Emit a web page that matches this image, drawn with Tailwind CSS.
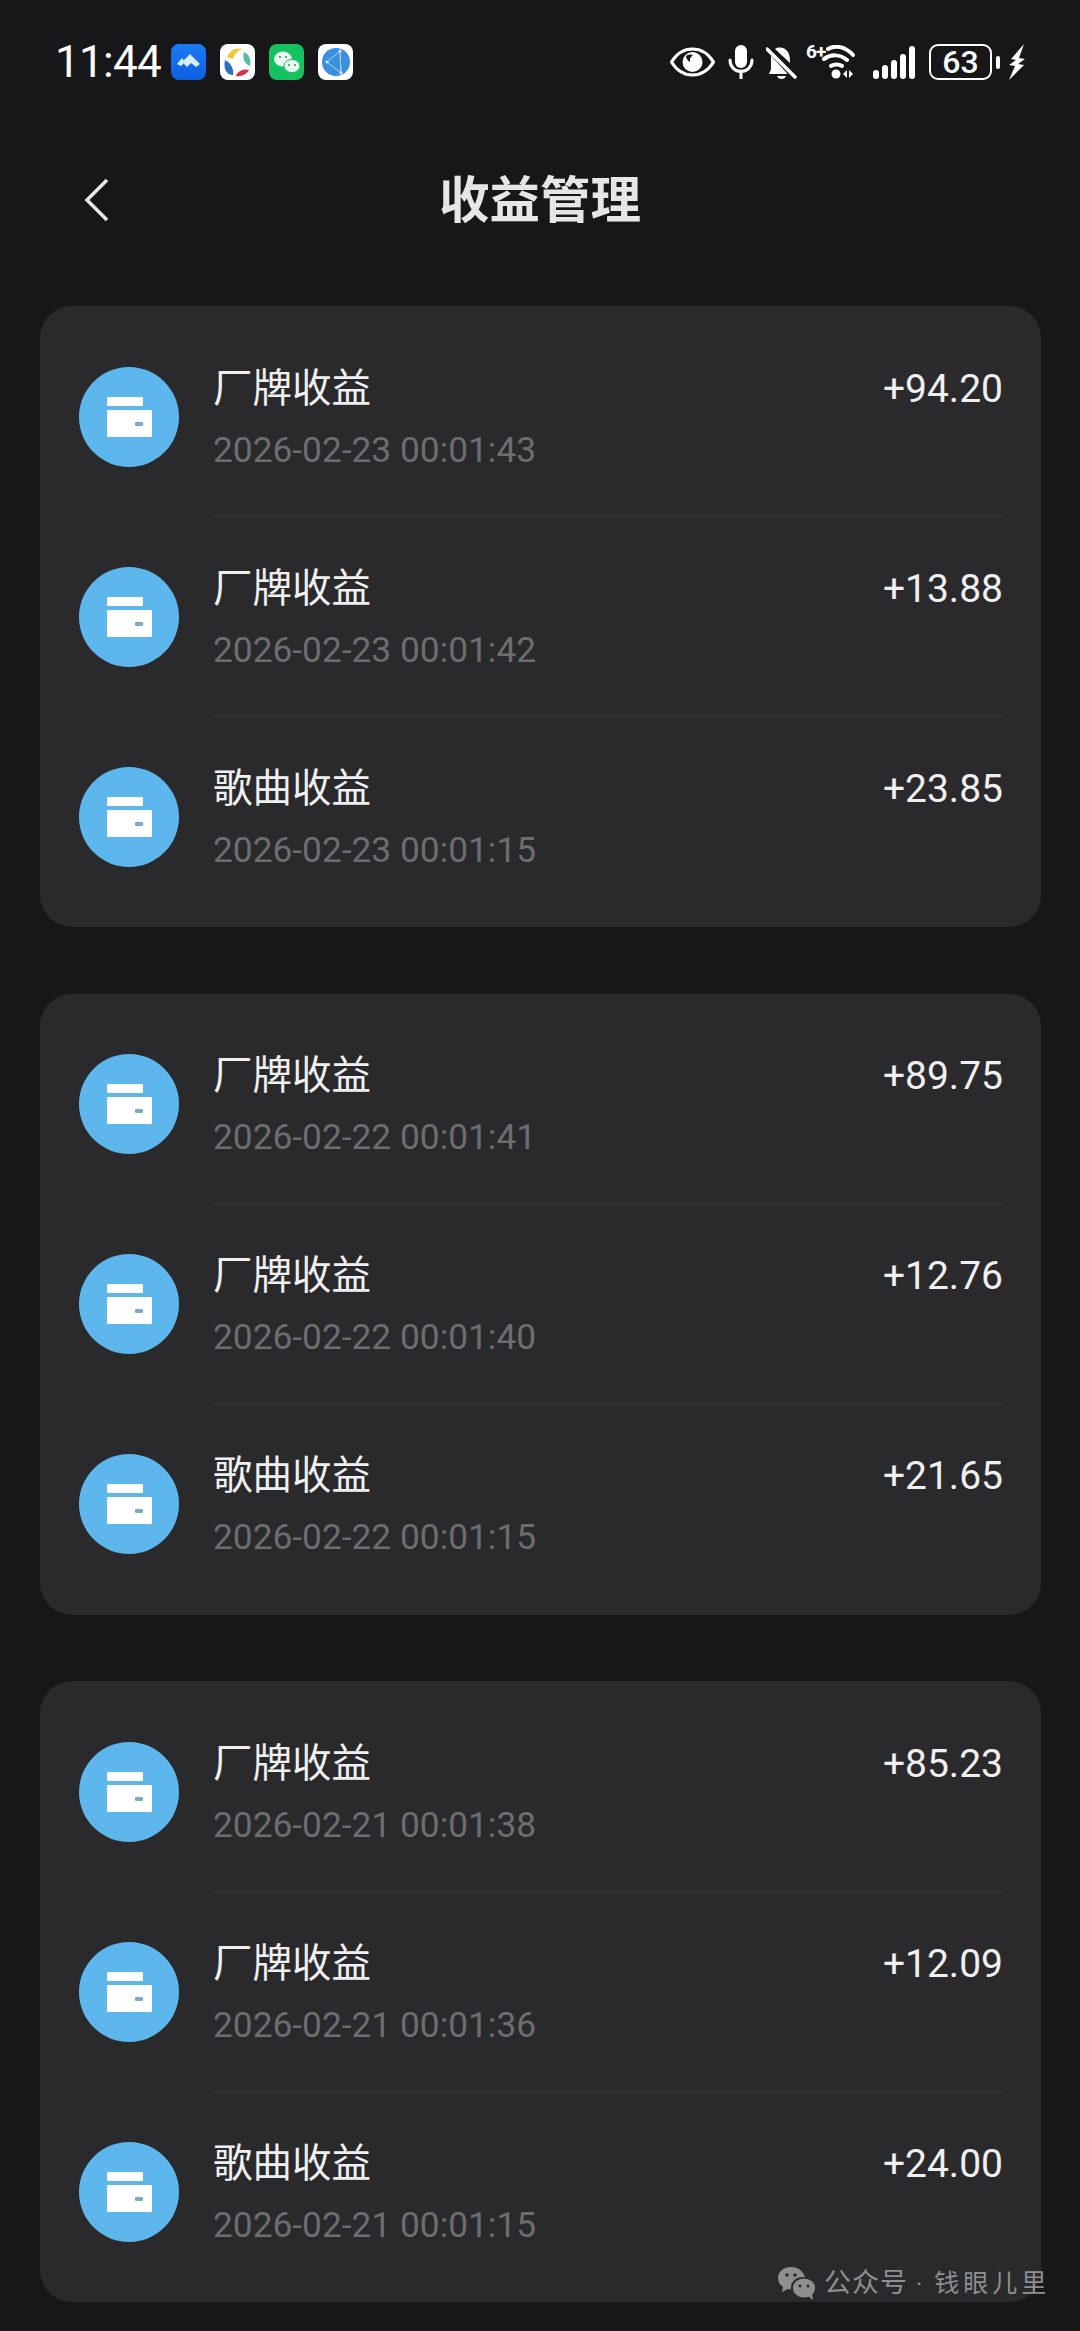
<!DOCTYPE html>
<html lang="zh-CN">
<head>
  <meta charset="UTF-8">
  <title>收益管理</title>
  <meta name="viewport" content="width=device-width, initial-scale=1.0">
  <script src="https://cdn.jsdelivr.net/npm/@tailwindcss/browser@4"></script>
</head>
<body class="bg-[#17171a] text-white font-['Roboto','Noto_Sans_CJK_SC',sans-serif] w-[1080px] h-[2331px] overflow-hidden relative">

  <svg class="hidden">
    <symbol id="wallet" viewBox="0 0 45 40">
      <rect x="0" y="0" width="36" height="9" rx="1" fill="#fff"/>
      <path d="M1 13h43a1 1 0 0 1 1 1v25a1 1 0 0 1-1 1H1a1 1 0 0 1-1-1V14a1 1 0 0 1 1-1z" fill="#fff"/>
      <rect x="28" y="25" width="8" height="4" rx="1" fill="#7fa9c4"/>
    </symbol>
  </svg>

  <!-- status bar -->
  <div class="h-[124px] pl-[55px] pr-[54px] flex items-center">
    <span class="text-[44px] leading-none tracking-[-0.7px] w-[116px] -mt-[1px]">11:44</span>
    <div class="flex gap-[14px]">
      <svg class="w-[35px] h-[36px]" viewBox="0 0 35 36">
        <defs><linearGradient id="blue" x1="0" y1="0" x2="0" y2="1"><stop offset="0" stop-color="#1c7cf5"/><stop offset="1" stop-color="#0a5fe0"/></linearGradient></defs>
        <rect width="35" height="36" rx="8" fill="url(#blue)"/>
        <path d="M6 20l5-6 3 4-4 4zM13 16l6-6 10 10-4 3-5-4-4 4-3-3z" fill="#dcebff"/>
      </svg>
      <svg class="w-[35px] h-[36px]" viewBox="0 0 35 36">
        <rect width="35" height="36" rx="8" fill="#fff"/>
        <path d="M7 13C10 6 16 3 23 5c-5 1-8 4-10 10z" fill="#f1c62f"/>
        <path d="M24 8c6 3 7 8 6 14-5-2-8-7-6-14z" fill="#4fbf9f"/>
        <path d="M5 16c5 2 9 8 8 15-6 0-10-6-8-15z" fill="#2d6fc4"/>
        <path d="M16 32c1-4 7-8 13-6-2 4-8 7-13 6z" fill="#d9304f"/>
      </svg>
      <svg class="w-[35px] h-[36px]" viewBox="0 0 35 36">
        <rect width="35" height="36" rx="8" fill="#16c160"/>
        <ellipse cx="14" cy="15" rx="9" ry="7.500" fill="#e9fbf0"/>
        <ellipse cx="23" cy="22" rx="8" ry="6.600" fill="#e9fbf0" stroke="#16c160"/>
        <circle cx="11" cy="13" r="1" fill="#16a055"/><circle cx="17" cy="13" r="1" fill="#16a055"/>
        <circle cx="20" cy="21" r="1" fill="#16a055"/><circle cx="26" cy="21" r="1" fill="#16a055"/>
      </svg>
      <svg class="w-[35px] h-[36px]" viewBox="0 0 35 36">
        <rect width="35" height="36" rx="8" fill="#fff"/>
        <circle cx="18" cy="18" r="14" fill="#3a8fe0"/>
        <path d="M22 7L9 18l14 11zM22 7l1 22" fill="none" stroke="#a9d6f5" stroke-width="1"/>
        <circle cx="22" cy="7" r="1.500" fill="#d6ecfa"/><circle cx="9" cy="18" r="1.500" fill="#d6ecfa"/><circle cx="23" cy="29" r="1.500" fill="#d6ecfa"/>
      </svg>
    </div>
    <div class="ml-auto flex items-center">
      <svg class="w-[45px] h-[30px]" viewBox="0 0 45 30">
        <path d="M1.5 15C7 6 14 2 22.500 2S38 6 43.500 15C38 24 31 28 22.500 28S7 24 1.500 15z" fill="none" stroke="#fff" stroke-width="3.200"/>
        <circle cx="22.500" cy="15" r="10" fill="#fff"/>
        <path d="M16 9a8 8 0 0 1 7-1a7 7 0 0 0-3 7a8 8 0 0 1-4-6z" fill="#17171a"/>
      </svg>
      <svg class="w-[26px] h-[34px] ml-[13px]" viewBox="0 0 26 34">
        <rect x="7" y="0" width="12" height="23" rx="6" fill="#fff"/>
        <path d="M2 15c0 7 5 11.500 11 11.500S24 22 24 15M13 26v8" fill="none" stroke="#fff" stroke-width="3" stroke-linecap="round"/>
      </svg>
      <svg class="w-[31px] h-[33px] ml-[12px]" viewBox="0 0 31 33">
        <path d="M5 8c2-1 4 0 5 1l15 16c2 1 3 1 3 3H3c0-2 2-3 2-5z" fill="#fff"/>
        <path d="M9 3c3-2 8-2 11 1 3 2 4 6 4 13z" fill="#fff"/>
        <path d="M11 30h9c-1 2-2 3-4.500 3S12 32 11 30z" fill="#fff"/>
        <path d="M2 1l27 30" stroke="#17171a" stroke-width="7"/>
        <path d="M1 3l28 28" stroke="#fff" stroke-width="3.500" stroke-linecap="round"/>
      </svg>
      <div class="relative w-[48px] h-[34px] ml-[10px]">
        <svg class="absolute left-[9px] top-0 w-[39px] h-[34px]" viewBox="0 0 39 34">
          <path d="M12 4C19 0 29 1 37 10M8 14c7-5 16-5 23 1M15 21c3-2 8-2 11 0" fill="none" stroke="#fff" stroke-width="4" stroke-linecap="round"/>
          <circle cx="20" cy="29" r="4.500" fill="#fff"/>
          <path d="M31 25v8l-4-4zM33 25l4 4-4 4z" fill="#fff"/>
        </svg>
        <span class="absolute -left-[1px] -top-[3px] text-[19px] leading-[20px] font-bold tracking-[-1px]">6+</span>
      </div>
      <svg class="w-[42px] h-[33px] ml-[18px]" viewBox="0 0 42 33">
        <rect x="0" y="24" width="6" height="9" rx="3" fill="#fff"/>
        <rect x="9" y="19" width="6" height="14" rx="3" fill="#fff"/>
        <rect x="18" y="14" width="6" height="19" rx="3" fill="#fff"/>
        <rect x="27" y="8" width="6" height="25" rx="3" fill="#fff"/>
        <rect x="36" y="0" width="6" height="33" rx="3" fill="#fff"/>
      </svg>
      <div class="ml-[14px] w-[63px] h-[36px] border-[2.500px] border-white rounded-[9px] flex items-center justify-center text-[32px] leading-none font-medium">63</div>
      <div class="ml-[4px] w-[4px] h-[13px] rounded-[2px] bg-white"></div>
      <svg class="w-[18px] h-[36px] ml-[8px]" viewBox="0 0 18 36">
        <path d="M16 0L3 15l5 1-7 5 6 1-6 14 15-15-6-1 7-5-6-1z" fill="#fff"/>
      </svg>
    </div>
  </div>

  <!-- header -->
  <div class="relative h-[156px] flex items-center justify-center">
    <svg class="absolute left-[83px] top-[53px] w-[28px] h-[46px]" viewBox="0 0 28 46">
      <path d="M24 3L4 23l20 20" fill="none" stroke="#e8e8e8" stroke-width="3.500"/>
    </svg>
    <h1 class="text-[50.500px] leading-none font-bold text-[#e6e6e6] -mt-[1px]">收益管理</h1>
  </div>

  <main class="mt-[26px] flex flex-col gap-[66.500px] pl-[40px] pr-[39px]">

    <section class="bg-[#2a2a2c] rounded-[32px] py-[10.500px] pl-[39px] pr-[38px]">
      <div class="flex h-[200px] items-center gap-[34px]">
        <div class="w-[100px] h-[100px] rounded-full bg-[#5eb7ec] flex items-center justify-center shrink-0"><svg class="w-[45px] h-[40px]"><use href="#wallet"/></svg></div>
        <div class="flex-1 h-full pt-[48px] border-b border-[#38383b] flex justify-between">
          <div><div class="text-[39.500px] leading-[48px] text-[#f0f0f0]">厂牌收益</div><div class="mt-[17px] text-[35.300px] leading-[40px] text-[#6d6d70]">2026-02-23 00:01:43</div></div>
          <div class="text-[39px] leading-[48px] text-[#f0f0f0]">+94.20</div>
        </div>
      </div>
      <div class="flex h-[200px] items-center gap-[34px]">
        <div class="w-[100px] h-[100px] rounded-full bg-[#5eb7ec] flex items-center justify-center shrink-0"><svg class="w-[45px] h-[40px]"><use href="#wallet"/></svg></div>
        <div class="flex-1 h-full pt-[48px] border-b border-[#38383b] flex justify-between">
          <div><div class="text-[39.500px] leading-[48px] text-[#f0f0f0]">厂牌收益</div><div class="mt-[17px] text-[35.300px] leading-[40px] text-[#6d6d70]">2026-02-23 00:01:42</div></div>
          <div class="text-[39px] leading-[48px] text-[#f0f0f0]">+13.88</div>
        </div>
      </div>
      <div class="flex h-[200px] items-center gap-[34px]">
        <div class="w-[100px] h-[100px] rounded-full bg-[#5eb7ec] flex items-center justify-center shrink-0"><svg class="w-[45px] h-[40px]"><use href="#wallet"/></svg></div>
        <div class="flex-1 h-full pt-[48px] flex justify-between">
          <div><div class="text-[39.500px] leading-[48px] text-[#f0f0f0]">歌曲收益</div><div class="mt-[17px] text-[35.300px] leading-[40px] text-[#6d6d70]">2026-02-23 00:01:15</div></div>
          <div class="text-[39px] leading-[48px] text-[#f0f0f0]">+23.85</div>
        </div>
      </div>
    </section>

    <section class="bg-[#2a2a2c] rounded-[32px] py-[10.500px] pl-[39px] pr-[38px]">
      <div class="flex h-[200px] items-center gap-[34px]">
        <div class="w-[100px] h-[100px] rounded-full bg-[#5eb7ec] flex items-center justify-center shrink-0"><svg class="w-[45px] h-[40px]"><use href="#wallet"/></svg></div>
        <div class="flex-1 h-full pt-[48px] border-b border-[#38383b] flex justify-between">
          <div><div class="text-[39.500px] leading-[48px] text-[#f0f0f0]">厂牌收益</div><div class="mt-[17px] text-[35.300px] leading-[40px] text-[#6d6d70]">2026-02-22 00:01:41</div></div>
          <div class="text-[39px] leading-[48px] text-[#f0f0f0]">+89.75</div>
        </div>
      </div>
      <div class="flex h-[200px] items-center gap-[34px]">
        <div class="w-[100px] h-[100px] rounded-full bg-[#5eb7ec] flex items-center justify-center shrink-0"><svg class="w-[45px] h-[40px]"><use href="#wallet"/></svg></div>
        <div class="flex-1 h-full pt-[48px] border-b border-[#38383b] flex justify-between">
          <div><div class="text-[39.500px] leading-[48px] text-[#f0f0f0]">厂牌收益</div><div class="mt-[17px] text-[35.300px] leading-[40px] text-[#6d6d70]">2026-02-22 00:01:40</div></div>
          <div class="text-[39px] leading-[48px] text-[#f0f0f0]">+12.76</div>
        </div>
      </div>
      <div class="flex h-[200px] items-center gap-[34px]">
        <div class="w-[100px] h-[100px] rounded-full bg-[#5eb7ec] flex items-center justify-center shrink-0"><svg class="w-[45px] h-[40px]"><use href="#wallet"/></svg></div>
        <div class="flex-1 h-full pt-[48px] flex justify-between">
          <div><div class="text-[39.500px] leading-[48px] text-[#f0f0f0]">歌曲收益</div><div class="mt-[17px] text-[35.300px] leading-[40px] text-[#6d6d70]">2026-02-22 00:01:15</div></div>
          <div class="text-[39px] leading-[48px] text-[#f0f0f0]">+21.65</div>
        </div>
      </div>
    </section>

    <section class="bg-[#2a2a2c] rounded-[32px] py-[10.500px] pl-[39px] pr-[38px]">
      <div class="flex h-[200px] items-center gap-[34px]">
        <div class="w-[100px] h-[100px] rounded-full bg-[#5eb7ec] flex items-center justify-center shrink-0"><svg class="w-[45px] h-[40px]"><use href="#wallet"/></svg></div>
        <div class="flex-1 h-full pt-[48px] border-b border-[#38383b] flex justify-between">
          <div><div class="text-[39.500px] leading-[48px] text-[#f0f0f0]">厂牌收益</div><div class="mt-[17px] text-[35.300px] leading-[40px] text-[#6d6d70]">2026-02-21 00:01:38</div></div>
          <div class="text-[39px] leading-[48px] text-[#f0f0f0]">+85.23</div>
        </div>
      </div>
      <div class="flex h-[200px] items-center gap-[34px]">
        <div class="w-[100px] h-[100px] rounded-full bg-[#5eb7ec] flex items-center justify-center shrink-0"><svg class="w-[45px] h-[40px]"><use href="#wallet"/></svg></div>
        <div class="flex-1 h-full pt-[48px] border-b border-[#38383b] flex justify-between">
          <div><div class="text-[39.500px] leading-[48px] text-[#f0f0f0]">厂牌收益</div><div class="mt-[17px] text-[35.300px] leading-[40px] text-[#6d6d70]">2026-02-21 00:01:36</div></div>
          <div class="text-[39px] leading-[48px] text-[#f0f0f0]">+12.09</div>
        </div>
      </div>
      <div class="flex h-[200px] items-center gap-[34px]">
        <div class="w-[100px] h-[100px] rounded-full bg-[#5eb7ec] flex items-center justify-center shrink-0"><svg class="w-[45px] h-[40px]"><use href="#wallet"/></svg></div>
        <div class="flex-1 h-full pt-[48px] flex justify-between">
          <div><div class="text-[39.500px] leading-[48px] text-[#f0f0f0]">歌曲收益</div><div class="mt-[17px] text-[35.300px] leading-[40px] text-[#6d6d70]">2026-02-21 00:01:15</div></div>
          <div class="text-[39px] leading-[48px] text-[#f0f0f0]">+24.00</div>
        </div>
      </div>
    </section>
  </main>

  <!-- watermark -->
  <div class="absolute left-[778px] top-[2267px] flex items-center text-[#8f8f8f]">
    <svg class="w-[37px] h-[33px]" viewBox="0 0 37 33">
      <path d="M13 0C6 0 0 4.500 0 11c0 4 2 7 5 9l-1 5 6-3c1 .3 2 .4 3 .5C12 15 18 9 27 10 25 4 20 0 13 0z" fill="#8f8f8f"/>
      <ellipse cx="26" cy="21" rx="11" ry="9.500" fill="#8f8f8f"/>
      <path d="M30 29l5 4-1-7z" fill="#8f8f8f"/>
      <circle cx="9" cy="8" r="1.700" fill="#2a2a2c"/><circle cx="17" cy="8" r="1.700" fill="#2a2a2c"/>
      <circle cx="22" cy="19" r="1.500" fill="#2a2a2c"/><circle cx="30" cy="19" r="1.500" fill="#2a2a2c"/>
    </svg>
    <span class="ml-[9px] text-[27px] leading-none tracking-[1px]">公众号</span>
    <span class="ml-[8px] text-[24px] leading-none">·</span>
    <span class="ml-[12px] text-[25px] leading-none tracking-[4px]">钱眼儿里</span>
  </div>

</body>
</html>
